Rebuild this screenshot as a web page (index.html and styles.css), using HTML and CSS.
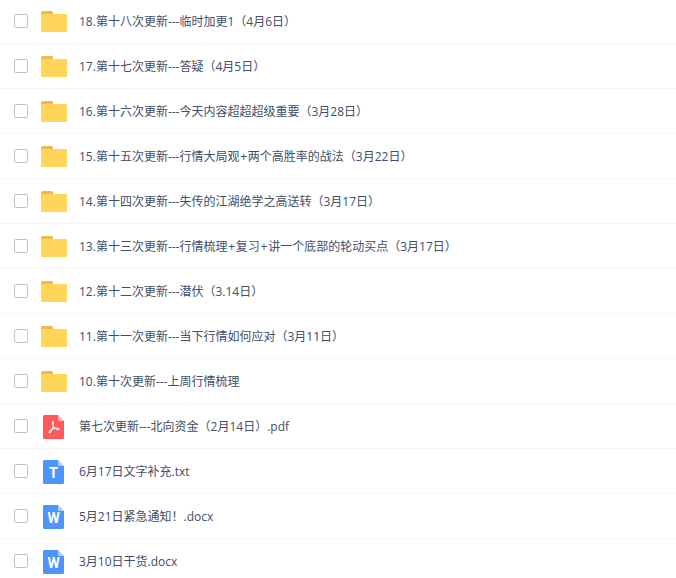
FILE: index.html
```html
<!DOCTYPE html>
<html lang="zh-CN">
<head>
<meta charset="utf-8">
<title>文件列表</title>
<link rel="stylesheet" href="styles.css">
</head>
<body>
<svg class="defs" width="0" height="0" aria-hidden="true">
  <symbol id="folder" viewBox="0 0 26 21">
    <path fill="#eeb94c" d="M0 1.500A1.500 1.500 0 0 1 1.500 0h9A1.500 1.500 0 0 1 12 1.500V4H0z"/>
    <path fill="#ffd659" d="M0 4a1 1 0 0 1 1-1h24a1 1 0 0 1 1 1v16a1 1 0 0 1-1 1H1a1 1 0 0 1-1-1z"/>
  </symbol>
  <symbol id="sheet" viewBox="0 0 21 24">
    <path fill="currentColor" d="M1.500 0H15l6 6v16.500a1.500 1.500 0 0 1-1.500 1.500h-18A1.500 1.500 0 0 1 0 22.500v-21A1.500 1.500 0 0 1 1.500 0z"/>
    <path fill="#fff" fill-opacity=".55" d="M15 0l6 6h-4.500A1.500 1.500 0 0 1 15 4.500z"/>
  </symbol>
</svg>
<ul class="list">
  <li class="row"><span class="check"></span><svg class="icon-folder"><use href="#folder"/></svg><span class="name">18.第十八次更新---临时加更1（4月6日）</span></li>
  <li class="row"><span class="check"></span><svg class="icon-folder"><use href="#folder"/></svg><span class="name">17.第十七次更新---答疑（4月5日）</span></li>
  <li class="row"><span class="check"></span><svg class="icon-folder"><use href="#folder"/></svg><span class="name">16.第十六次更新---今天内容超超超级重要（3月28日）</span></li>
  <li class="row"><span class="check"></span><svg class="icon-folder"><use href="#folder"/></svg><span class="name">15.第十五次更新---行情大局观<span class="plus">+</span>两个高胜率的战法（3月22日）</span></li>
  <li class="row"><span class="check"></span><svg class="icon-folder"><use href="#folder"/></svg><span class="name">14.第十四次更新---失传的江湖绝学之高送转（3月17日）</span></li>
  <li class="row"><span class="check"></span><svg class="icon-folder"><use href="#folder"/></svg><span class="name">13.第十三次更新---行情梳理<span class="plus">+</span>复习<span class="plus">+</span>讲一个底部的轮动买点（3月17日）</span></li>
  <li class="row"><span class="check"></span><svg class="icon-folder"><use href="#folder"/></svg><span class="name">12.第十二次更新---潜伏（3.14日）</span></li>
  <li class="row"><span class="check"></span><svg class="icon-folder"><use href="#folder"/></svg><span class="name">11.第十一次更新---当下行情如何应对（3月11日）</span></li>
  <li class="row"><span class="check"></span><svg class="icon-folder"><use href="#folder"/></svg><span class="name">10.第十次更新---上周行情梳理</span></li>
  <li class="row"><span class="check"></span>
    <span class="file pdf"><svg class="sheet"><use href="#sheet"/></svg>
      <svg class="glyph" viewBox="0 0 21 24"><path fill="none" stroke="#fff" stroke-opacity=".92" stroke-width="1.100" stroke-linecap="round" stroke-linejoin="round" d="M10 6.500c-.5 0-.7.500-.6 1.300.3 2.300 2 5.300 3.800 6.300 1 .6 2.800.7 3 0 .2-.8-1.700-1-3.200-.9-2.500.2-5.300 1.400-6.500 3-.6.800-.6 1.500-.1 1.500.7 0 2.100-1.800 3-4 .8-2 1.200-4 1-6-.1-.8-.1-1.200-.4-1.200z"/></svg>
    </span><span class="name">第七次更新---北向资金（2月14日）.pdf</span></li>
  <li class="row"><span class="check"></span>
    <span class="file doc"><svg class="sheet"><use href="#sheet"/></svg><span class="letter letter-t">T</span></span><span class="name">6月17日文字补充.txt</span></li>
  <li class="row"><span class="check"></span>
    <span class="file doc"><svg class="sheet"><use href="#sheet"/></svg><span class="letter">W</span></span><span class="name">5月21日紧急通知！.docx</span></li>
  <li class="row"><span class="check"></span>
    <span class="file doc"><svg class="sheet"><use href="#sheet"/></svg><span class="letter">W</span></span><span class="name">3月10日干货.docx</span></li>
</ul>
</body>
</html>
```
FILE: styles.css
```css
html, body {
  margin: 0;
  padding: 0;
  background: #fff;
  overflow: hidden;
}
.defs {
  position: absolute;
}
.list {
  list-style: none;
  margin: -1px 0 0;
  padding: 0;
}
.row {
  display: flex;
  align-items: center;
  height: 44px;
  border-bottom: 1px solid #f5f6fa;
  padding-left: 14px;
}
.check {
  flex: none;
  box-sizing: border-box;
  width: 14px;
  height: 14px;
  border: 1px solid #b9c5d5;
  border-radius: 2px;
  background: #fff;
}
.icon-folder {
  flex: none;
  width: 26px;
  height: 21px;
  margin: 1px 12px 0 13px;
}
.file {
  flex: none;
  position: relative;
  width: 21px;
  height: 24px;
  margin: 2px 15px 0;
}
.pdf { color: #ff5959; }
.doc { color: #4d95fb; }
.sheet, .glyph {
  display: block;
  width: 21px;
  height: 24px;
}
.glyph {
  position: absolute;
  left: 0;
  top: 0;
}
.letter {
  position: absolute;
  left: 0;
  right: 0;
  top: 3px;
  text-align: center;
  color: #fff;
  font: 700 14px/20px Roboto, sans-serif;
}
.letter-t {
  font-size: 15px;
}
.name {
  font-family: "Open Sans", "Noto Sans CJK SC", sans-serif;
  font-size: 12px;
  line-height: 20px;
  color: #424e67;
  white-space: nowrap;
  margin-top: 2px;
}
.plus {
  padding: 0 .75px;
}
```
